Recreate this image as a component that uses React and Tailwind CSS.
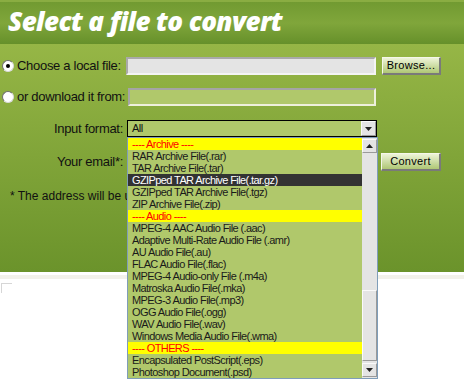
import React from 'react';

const formats = [
  { label: '---- Archive ----', group: true },
  { label: 'RAR Archive File(.rar)' },
  { label: 'TAR Archive File(.tar)' },
  { label: 'GZIPped TAR Archive File(.tar.gz)', selected: true },
  { label: 'GZIPped TAR Archive File(.tgz)' },
  { label: 'ZIP Archive File(.zip)' },
  { label: '---- Audio ----', group: true },
  { label: 'MPEG-4 AAC Audio File (.aac)' },
  { label: 'Adaptive Multi-Rate Audio File (.amr)' },
  { label: 'AU Audio File(.au)' },
  { label: 'FLAC Audio File(.flac)' },
  { label: 'MPEG-4 Audio-only File (.m4a)' },
  { label: 'Matroska Audio File(.mka)' },
  { label: 'MPEG-3 Audio File(.mp3)' },
  { label: 'OGG Audio File(.ogg)' },
  { label: 'WAV Audio File(.wav)' },
  { label: 'Windows Media Audio File(.wma)' },
  { label: '---- OTHERS ----', group: true },
  { label: 'Encapsulated PostScript(.eps)' },
  { label: 'Photoshop Document(.psd)' },
];

function Arrow({ up }) {
  return (
    <svg width="7" height="4" viewBox="0 0 7 4">
      <polygon points={up ? '0,4 7,4 3.5,0' : '0,0 7,0 3.5,4'} fill="#222" />
    </svg>
  );
}

function ArrowButton({ up }) {
  return (
    <div className="w-[15px] h-[14px] bg-[#e4e4e4] border border-[#fafafa] border-r-[#9a9a9a] border-b-[#9a9a9a] flex items-center justify-center">
      <Arrow up={up} />
    </div>
  );
}

function Radio({ checked }) {
  return (
    <span className="w-[12px] h-[12px] rounded-full bg-white border border-[#6f6f6f] border-r-[#d9d9d9] border-b-[#d9d9d9] flex items-center justify-center shrink-0">
      {checked && <span className="w-[4px] h-[4px] rounded-full bg-black" />}
    </span>
  );
}

function GreenButton({ children, className }) {
  return (
    <button className={`h-[18px] bg-linear-to-b from-[#eef4d8] to-[#afc774] border border-[#f5f7ea] border-r-2 border-b-2 border-r-[#7a7a7a] border-b-[#7a7a7a] text-[11px] leading-none text-black tracking-[0.3px] flex items-center justify-center ${className}`}>
      {children}
    </button>
  );
}

export default function App() {
  return (
    <div className="w-[464px] h-[379px] relative overflow-hidden bg-white font-['Liberation_Sans',Arial,sans-serif] text-[#111]">
      {/* header */}
      <div className="h-[44px] border-t-2 border-[#8aad42] bg-linear-to-b from-[#719a31] via-[#80a63b] to-[#66902a] flex items-center pl-[8px]">
        <h1 className="text-white font-['Open_Sans',sans-serif] font-extrabold italic text-[26px] leading-none tracking-[-0.6px] -mt-[4px]">
          Select a file to convert
        </h1>
      </div>

      {/* form panel */}
      <div className="h-[228px] bg-linear-to-b from-[#96b646] to-[#6b932b] pt-[13px] text-[13px] tracking-[-0.3px]">
        <div className="flex items-center h-[18px]">
          <div className="w-[126px] flex items-center pl-[2px] gap-[3px]">
            <Radio checked />
            <span>Choose a local file:</span>
          </div>
          <div className="w-[250px] h-[18px] bg-[#e4e4e4] border-2 border-[#a9a9a9] border-r-[#f4f4f4] border-b-[#f4f4f4]" />
          <GreenButton className="ml-[6px] w-[59px]">Browse...</GreenButton>
        </div>

        <div className="flex items-center h-[18px] mt-[13px]">
          <div className="w-[128px] flex items-center pl-[2px] gap-[3px]">
            <Radio />
            <span>or download it from:</span>
          </div>
          <div className="w-[248px] h-[18px] bg-[#b0c86b] border-2 border-[#a5a5a5] border-r-[#eef0dc] border-b-[#eef0dc]" />
        </div>

        <div className="flex items-center h-[17px] mt-[14px]">
          <div className="w-[127px] text-right pr-[4px]">Input format:</div>
          <div className="w-[250px] h-[17px] bg-[#b0c86b] border border-black flex items-center">
            <span className="flex-1 pl-[4px] text-[11px] tracking-[-0.5px]">All</span>
            <div className="w-[15px] h-[15px] bg-[#e4e4e4] border border-[#fafafa] border-r-[#9a9a9a] border-b-[#9a9a9a] flex items-center justify-center">
              <Arrow />
            </div>
          </div>
        </div>

        <div className="flex items-center h-[17px] mt-[16px]">
          <div className="w-[127px] text-right pr-[4px]">Your email*:</div>
          <div className="w-[250px] h-[17px] bg-[#b0c86b]" />
          <GreenButton className="ml-[4px] w-[60px]">Convert</GreenButton>
        </div>

        {/* the rest of this line sits behind the open list */}
        <p className="mt-[17px] ml-[10px] w-[117px] overflow-hidden whitespace-nowrap text-[12px] tracking-normal">
          * The address will be used only to notify you.
        </p>
      </div>

      <div className="h-[3px] bg-white" />
      <div className="h-[4px] bg-[#f2f1ea]" />
      <div className="mt-[4px] ml-[1px] w-[11px] h-[10px] border-t border-l border-[#d6d6d6]" />

      {/* open format list */}
      <div className="absolute left-[127px] top-[137px] w-[251px] h-[242px] border border-[#7f9db9] bg-[#b0c86b] flex">
        <ul className="flex-1">
          {formats.map((f) => (
            <li
              key={f.label}
              className={`h-[12px] leading-[12px] text-[11px] tracking-[-0.6px] pl-[4px] whitespace-nowrap ${
                f.group ? 'bg-[#ffff00] text-[#ff0000]' : f.selected ? 'bg-[#333333] text-white' : 'text-[#1a1a1a]'
              }`}
            >
              {f.label}
            </li>
          ))}
        </ul>
        <div className="w-[15px] bg-[#e4e4e4] flex flex-col pt-[1px] pb-[1px]">
          <ArrowButton up />
          <div className="flex-1" />
          <div className="h-[71px] bg-[#e4e4e4] border border-[#fafafa] border-r-[#9a9a9a] border-b-[#9a9a9a]" />
          <div className="h-[2px]" />
          <ArrowButton />
        </div>
      </div>
    </div>
  );
}
